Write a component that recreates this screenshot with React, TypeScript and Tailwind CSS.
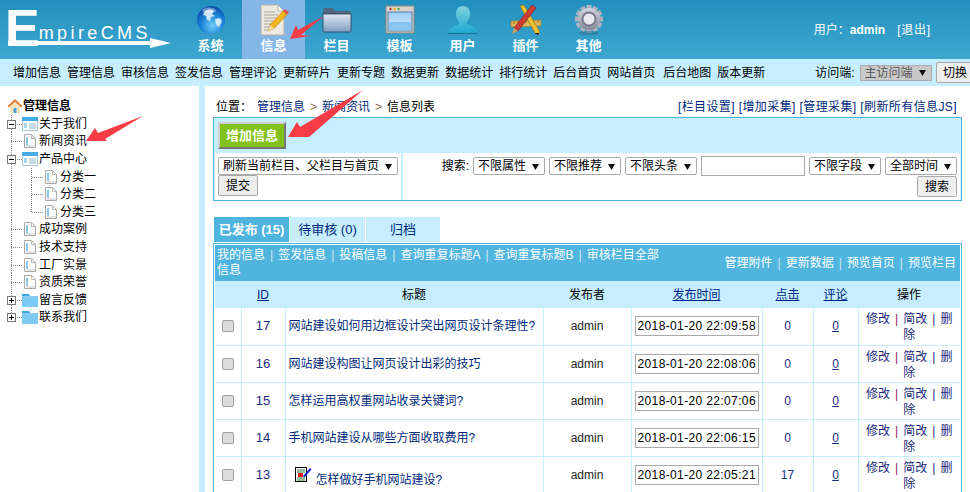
const menu = ["增加信息", "管理信息", "审核信息", "签发信息", "管理评论", "更新碎片", "更新专题", "数据更新", "数据统计", "排行统计", "后台首页", "网站首页", "后台地图", "版本更新"]

const rows = [
  { id: 17, title: "网站建设如何用边框设计突出网页设计条理性?", time: "2018-01-20 22:09:58", hits: 0 },
  { id: 16, title: "网站建设构图让网页设计出彩的技巧", time: "2018-01-20 22:08:06", hits: 0 },
  { id: 15, title: "怎样运用高权重网站收录关键词?", time: "2018-01-20 22:07:06", hits: 0 },
  { id: 14, title: "手机网站建设从哪些方面收取费用?", time: "2018-01-20 22:06:15", hits: 0 },
  { id: 13, title: "怎样做好手机网站建设?", time: "2018-01-20 22:05:21", hits: 17, pic: true },
]

function GlobeIcon() {
  return (
    <svg width="30" height="30" viewBox="0 0 30 30">
      <defs>
        <radialGradient id="globe" cx="0.55" cy="0.7" r="0.75">
          <stop offset="0" stopColor="#6fd0f5" />
          <stop offset="0.55" stopColor="#1a80d8" />
          <stop offset="1" stopColor="#0a3f9e" />
        </radialGradient>
      </defs>
      <circle cx="15" cy="15" r="14" fill="url(#globe)" />
      <path d="M9 6c3-2 7-2 9 0l-2 3 3 2-4 1-1 4-3-1-1-4-3-1zM19 14l5-1 2 3-3 6-3-2z" fill="#e8f4fb" opacity="0.85" />
      <ellipse cx="13" cy="5.5" rx="7" ry="3" fill="#fff" opacity="0.35" />
    </svg>
  )
}

function NoteIcon() {
  return (
    <svg width="30" height="32" viewBox="0 0 30 32">
      <path d="M2 1h17l6 6v24H2z" fill="#eeeae2" stroke="#b5b0a6" />
      <path d="M19 1v6h6z" fill="#fff" stroke="#b5b0a6" />
      <path d="M5 8h11M5 11h14M5 14h14M5 17h12M5 20h10M5 23h8M5 26h6" stroke="#a8a49c" />
      <path d="M9 27l2-6L24 7l4 3.5L15 24.5z" fill="#f2b71e" stroke="#b27c10" strokeWidth="0.6" />
      <path d="M24 7l2-2 4 3.5-2 2z" fill="#d9534a" />
      <path d="M9 27l2-6 4 3.5z" fill="#f5dcb0" />
    </svg>
  )
}

function FolderIcon() {
  return (
    <svg width="32" height="28" viewBox="0 0 32 28">
      <defs>
        <linearGradient id="folder" x1="0" y1="0" x2="0" y2="1">
          <stop offset="0" stopColor="#dfe8f2" />
          <stop offset="1" stopColor="#7f9dc4" />
        </linearGradient>
      </defs>
      <path d="M2 4a2 2 0 0 1 2-2h8l2 3h14a2 2 0 0 1 2 2v18H2z" fill="#51657f" />
      <path d="M2 8h28v17a1 1 0 0 1-1 1H3a1 1 0 0 1-1-1z" fill="url(#folder)" stroke="#2b3e5a" strokeWidth="0.8" />
    </svg>
  )
}

function WindowIcon() {
  return (
    <svg width="30" height="30" viewBox="0 0 30 30">
      <defs>
        <linearGradient id="pane" x1="0" y1="0" x2="0" y2="1">
          <stop offset="0" stopColor="#9ccaf3" />
          <stop offset="1" stopColor="#dff0fc" />
        </linearGradient>
      </defs>
      <rect x="1" y="1" width="28" height="27" fill="#d8d3cc" stroke="#8e8a84" />
      <rect x="3" y="7" width="24" height="19" fill="url(#pane)" stroke="#5c7ea8" />
      <path d="M3.5 17h23v8.5h-23z" fill="#6db7ee" opacity="0.7" />
      <circle cx="5.5" cy="4" r="1.2" fill="#c8342c" />
      <circle cx="9.5" cy="4" r="1.2" fill="#e4b020" />
      <circle cx="13.5" cy="4" r="1.2" fill="#4ea83a" />
    </svg>
  )
}

function UserIcon() {
  return (
    <svg width="32" height="30" viewBox="0 0 32 30">
      <defs>
        <linearGradient id="user" x1="0" y1="0" x2="0" y2="1">
          <stop offset="0" stopColor="#7fd4e0" />
          <stop offset="1" stopColor="#1fa8cf" />
        </linearGradient>
      </defs>
      <path d="M16 1c5 0 7 4 7 8 0 3-1 6-3 8v2c4 2 10 3 11 9H1c1-6 7-7 11-9v-2c-2-2-3-5-3-8 0-4 2-8 7-8z" fill="url(#user)" />
      <path d="M1 28h30v1H1z" fill="#1b6f8f" />
    </svg>
  )
}

function ToolsIcon() {
  return (
    <svg width="32" height="32" viewBox="0 0 32 32">
      <path d="M1 17l30-1 0 6-30 1z" fill="#e0b65a" stroke="#9a7a2c" strokeWidth="0.6" />
      <path d="M4 17v3M8 17v2M12 17v3M16 17v2M20 17v3M24 17v2M28 16v3" stroke="#8a6a20" />
      <path d="M10 2l4-1 16 27-2 3-3-2z" fill="#f0c230" stroke="#8a6a10" strokeWidth="0.6" />
      <path d="M22 1l4 3L8 27l-4-3z" fill="#cf3e35" stroke="#7e1e18" strokeWidth="0.6" />
      <path d="M4 24l4 3-6 3z" fill="#c9a05a" />
      <path d="M25 29l3 2 1-2z" fill="#111" />
    </svg>
  )
}

function GearIcon() {
  const teeth = [0, 30, 60, 90, 120, 150, 180, 210, 240, 270, 300, 330]
  return (
    <svg width="30" height="32" viewBox="0 0 30 32">
      <defs>
        <linearGradient id="gear" x1="0" y1="0" x2="0" y2="1">
          <stop offset="0" stopColor="#d4d6e0" />
          <stop offset="1" stopColor="#85879a" />
        </linearGradient>
      </defs>
      {teeth.map((a) => (
        <rect key={a} x="12.5" y="1" width="5" height="6" fill="#b0b2c0" transform={`rotate(${a} 15 15)`} />
      ))}
      <circle cx="15" cy="15" r="11" fill="url(#gear)" />
      <circle cx="15" cy="15" r="6.5" fill="#e8e8ee" stroke="#77798c" strokeWidth="2" />
      <ellipse cx="15" cy="29" rx="10" ry="2" fill="#2a6a8a" opacity="0.5" />
    </svg>
  )
}

const navItems = [
  { label: "系统", icon: <GlobeIcon /> },
  { label: "信息", icon: <NoteIcon />, active: true },
  { label: "栏目", icon: <FolderIcon /> },
  { label: "模板", icon: <WindowIcon /> },
  { label: "用户", icon: <UserIcon /> },
  { label: "插件", icon: <ToolsIcon /> },
  { label: "其他", icon: <GearIcon /> },
]

function Logo() {
  return (
    <div className="relative h-[59px] w-[179px] shrink-0 pl-[5px] font-['Liberation_Sans',sans-serif] text-white">
      <div className="flex items-end">
        <span className="text-[52px] leading-[56px] font-bold">E</span>
        <span className="mb-[13px] ml-[-1px] text-[18px] leading-[20px] tracking-[3.4px]">mpireCMS</span>
      </div>
      <svg className="absolute left-[8px] top-[38px]" width="164" height="10" viewBox="0 0 164 10">
        <path d="M0 3h142V0l21 5-21 5V7H0z" fill="#fff" />
      </svg>
    </div>
  )
}

function TreeLines({ kind, box }: { kind: "mid" | "last" | "sub" | "subLast"; box?: "plus" | "minus" }) {
  const sub = kind === "sub" || kind === "subLast"
  return (
    <svg className="shrink-0" width={sub ? 43 : 22} height="18" viewBox={sub ? "0 0 43 18" : "0 0 22 18"}>
      <path d={kind === "last" ? "M11.5 0v9" : "M11.5 0v18"} stroke="#888" strokeDasharray="1 1" fill="none" />
      <path d="M11 9.5h11" stroke="#888" strokeDasharray="1 1" fill="none" opacity={sub ? 0 : 1} />
      {sub && <path d={kind === "subLast" ? "M31.5 0v9M32 9.5h11" : "M31.5 0v18M32 9.5h11"} stroke="#888" strokeDasharray="1 1" fill="none" />}
      {box && (
        <g>
          <rect x="7.5" y="5.5" width="8" height="8" fill="#fff" stroke="#777" />
          <path d={box === "plus" ? "M9 9.5h5M11.5 7v5" : "M9 9.5h5"} stroke="#000" />
        </g>
      )}
    </svg>
  )
}

function PageIcon() {
  return (
    <svg className="shrink-0" width="16" height="16" viewBox="0 0 16 16">
      <path d="M2.5 1.5h7l4 4v9h-11z" fill="#fff" stroke="#aaa" />
      <path d="M9.500 1.500v4h4" fill="none" stroke="#bbb" />
      <path d="M4 4h2v8H4z" fill="#8cc8ee" />
      <path d="M4 12h9v2H4z" fill="#e4e4e4" />
    </svg>
  )
}

function ListIcon() {
  return (
    <svg className="shrink-0" width="16" height="16" viewBox="0 0 16 16">
      <rect x="0.500" y="1.500" width="15" height="13" fill="#fff" stroke="#a8c4d8" />
      <rect x="0" y="1" width="16" height="4" fill="#45ace8" />
      <rect x="2" y="7" width="3" height="5" fill="#a4d6f4" />
      <path d="M7 8h7M7 10h7M7 12h7" stroke="#8fb8d4" />
    </svg>
  )
}

function TreeFolder() {
  return (
    <svg className="shrink-0" width="16" height="16" viewBox="0 0 16 16">
      <path d="M0 2h7l1 2h8v11H0z" fill="#3aa4e4" />
      <path d="M0 6h16v9H0z" fill="#7ccbf4" />
      <path d="M0 5h16" stroke="#d8f0fc" />
    </svg>
  )
}

function TreeRow({ label, kind, box, icon }: { label: string; kind: "mid" | "last" | "sub" | "subLast"; box?: "plus" | "minus"; icon: "page" | "list" | "folder" }) {
  return (
    <div className="flex h-[17.6px] items-center">
      <TreeLines kind={kind} box={box} />
      {icon === "page" && <PageIcon />}
      {icon === "list" && <ListIcon />}
      {icon === "folder" && <TreeFolder />}
      <span className="ml-[1px] whitespace-nowrap">{label}</span>
    </div>
  )
}

function Sidebar() {
  return (
    <aside className="w-[199px] shrink-0 pt-[9px] text-[12px] leading-[16px] text-black">
      <div className="mb-[1px] flex h-[19px] items-end pl-[7px] font-bold">
        <svg width="16" height="16" viewBox="0 0 16 16">
          <path d="M8 1L0.500 8l1.500 1.500L8 4l6 5.500L15.500 8z" fill="#e8823a" />
          <path d="M3 9l5-4.500L13 9v6H3z" fill="#f4e4c0" />
          <path d="M6.500 10h3v5h-3z" fill="#4d9fdc" />
        </svg>
        <span>管理信息</span>
      </div>
      <TreeRow label="关于我们" kind="mid" box="minus" icon="list" />
      <TreeRow label="新闻资讯" kind="mid" icon="page" />
      <TreeRow label="产品中心" kind="mid" box="minus" icon="list" />
      <TreeRow label="分类一" kind="sub" icon="page" />
      <TreeRow label="分类二" kind="sub" icon="page" />
      <TreeRow label="分类三" kind="subLast" icon="page" />
      <TreeRow label="成功案例" kind="mid" icon="page" />
      <TreeRow label="技术支持" kind="mid" icon="page" />
      <TreeRow label="工厂实景" kind="mid" icon="page" />
      <TreeRow label="资质荣誉" kind="mid" icon="page" />
      <TreeRow label="留言反馈" kind="mid" box="plus" icon="folder" />
      <TreeRow label="联系我们" kind="last" box="plus" icon="folder" />
    </aside>
  )
}

function Dropdown({ label, className }: { label: string; className: string }) {
  return (
    <div className={`flex items-center justify-between rounded-[2px] border border-[#a9a9a9] pl-[4px] pr-[5px] text-[12px] leading-[16px] ${className}`}>
      <span className="whitespace-nowrap">{label}</span>
      <svg className="shrink-0" width="7" height="7" viewBox="0 0 7 7">
        <path d="M0 1h7L3.500 7z" fill="#111" />
      </svg>
    </div>
  )
}

function GrayButton({ label, className }: { label: string; className: string }) {
  return (
    <button className={`rounded-[2px] border border-[#a9a9a9] bg-[#eeeeee] text-[12px] leading-[16px] text-black ${className}`}>
      {label}
    </button>
  )
}

function Pipe() {
  return <span className="mx-[5px] text-[#d5e6f5]">|</span>
}

function Toolbar() {
  return (
    <div className="flex h-[36px] items-center justify-between bg-[#4fb4de] pl-[2px] pr-[4px] text-[12px] leading-[15px] text-white">
      <div className="w-[444px]">
        我的信息<Pipe />签发信息<Pipe />投稿信息<Pipe />查询重复标题A<Pipe />查询重复标题B<Pipe />审核栏目全部<br />信息
      </div>
      <div className="whitespace-nowrap">
        管理附件<Pipe />更新数据<Pipe />预览首页<Pipe />预览栏目
      </div>
    </div>
  )
}

function ListTable() {
  return (
    <table className="w-[745px] table-fixed border-collapse text-center text-[12px] leading-[16px] text-[#1c2a80]">
      <colgroup>
        <col className="w-[26px]" />
        <col className="w-[44px]" />
        <col className="w-[258px]" />
        <col className="w-[88px]" />
        <col className="w-[131px]" />
        <col className="w-[51px]" />
        <col className="w-[45px]" />
        <col className="w-[102px]" />
      </colgroup>
      <thead>
        <tr className="h-[27px] bg-[#c6eeff] font-normal text-black">
          <th className="font-normal"></th>
          <th className="font-normal text-[#00238a] underline">ID</th>
          <th className="font-normal">标题</th>
          <th className="font-normal">发布者</th>
          <th className="font-normal text-[#00238a] underline">发布时间</th>
          <th className="font-normal text-[#00238a] underline">点击</th>
          <th className="font-normal text-[#00238a] underline">评论</th>
          <th className="font-normal">操作</th>
        </tr>
      </thead>
      <tbody>
        {rows.map((r) => (
          <tr key={r.id} className="h-[37px] border-b border-[#c6eeff]">
            <td className="border-r border-[#c6eeff]">
              <span className="mx-auto block h-[12px] w-[12px] rounded-[2px] border border-[#a0a0a0] bg-[#dcdcdc]" />
            </td>
            <td className="border-r border-[#c6eeff] text-[13px]">{r.id}</td>
            <td className="border-r border-[#c6eeff] pl-[3px] text-left text-[#002a7c]">
              {r.pic ? (
                <div className="flex items-end pl-[6px] pt-[4px]">
                  <svg className="mb-[5px] shrink-0" width="17" height="17" viewBox="0 0 17 17">
                    <rect x="0.500" y="1.500" width="11" height="14" fill="#fff" stroke="#000" />
                    <path d="M2 4h8M2 6h8M2 12h8M2 14h8" stroke="#2a7a3a" />
                    <rect x="3" y="7" width="5" height="4" fill="#e01818" />
                    <path d="M8 10l7-8 1.500 1.500-7 8z" fill="#1a2ad0" />
                  </svg>
                  <span className="ml-[4px] whitespace-nowrap">{r.title}</span>
                </div>
              ) : (
                <span className="whitespace-nowrap">{r.title}</span>
              )}
            </td>
            <td className="border-r border-[#c6eeff] text-[#222]">admin</td>
            <td className="border-r border-[#c6eeff]">
              <input
                readOnly
                value={r.time}
                className="ml-[3px] block h-[20px] w-[124px] border border-[#a9a9a9] px-[2px] text-[12px] tracking-[0.37px] text-black"
              />
            </td>
            <td className="border-r border-[#c6eeff]">{r.hits}</td>
            <td className="border-r border-[#c6eeff] underline">0</td>
            <td className="px-[4px] align-top pt-[3px]">
              修改<span className="mx-[5px] text-[#8a1a5a]">|</span>简改<span className="mx-[5px] text-[#1c2a80]">|</span>删<br />除
            </td>
          </tr>
        ))}
      </tbody>
    </table>
  )
}

function Arrows() {
  return (
    <svg className="pointer-events-none absolute left-0 top-0" width="970" height="492" viewBox="0 0 970 492">
      <path d="M290 39l6-14 2 5 26-14-23 19 10 1z" fill="#f83c46" />
      <path d="M86 141l9-13 3 5 45-17-38 23 2 2z" fill="#f83c46" />
      <path d="M288 137l9-15 3 5 63-37-54 47 3 0z" fill="#f83c46" />
    </svg>
  )
}

export default function App() {
  return (
    <div className="relative h-[492px] w-[970px] overflow-hidden bg-white font-['Liberation_Sans','Noto_Sans_CJK_SC',sans-serif]">
      <header className="flex h-[59px] bg-gradient-to-b from-[#2190bf] to-[#3da7cf]">
        <Logo />
        <nav className="flex">
          {navItems.map((item) => (
            <div
              key={item.label}
              className={`flex w-[63px] flex-col items-center pt-[3px] ${item.active ? "bg-[#84b7e8]" : ""}`}
            >
              <div className="flex h-[33px] items-center">{item.icon}</div>
              <span className="mt-[2px] text-[13px] leading-[16px] font-bold text-white">{item.label}</span>
            </div>
          ))}
        </nav>
        <div className="ml-auto mr-[39px] flex items-center pt-[1px] text-[12px] whitespace-nowrap text-white">
          用户：<b>admin</b>
          <span className="ml-[12px] tracking-[0.8px]">[退出]</span>
        </div>
      </header>

      <div className="flex h-[27px] items-center bg-[#c6eeff] pl-[13px] text-[12px] text-black">
        <div className="flex gap-[6px]">
          {menu.map((m) => (
            <span key={m} className={`whitespace-nowrap ${m === "后台地图" ? "ml-[2px]" : ""}`}>{m}</span>
          ))}
        </div>
        <span className="ml-[50px] whitespace-nowrap">访问端:</span>
        <Dropdown label="主访问端" className="ml-[5px] h-[16px] w-[72px] shrink-0 rounded-none bg-[#c9c9c9] text-[#555]" />
        <GrayButton label="切换" className="ml-[4px] h-[21px] w-[39px] shrink-0" />
      </div>

      <div className="flex h-[406px]">
        <Sidebar />
        <div className="w-[6px] shrink-0 bg-[#c6eeff]" />
        <main className="w-[765px] shrink-0 pl-[8px] pr-[8px] text-[12px] leading-[16px] text-black">
          <div className="flex h-[31px] items-end justify-between pb-[2px] pl-[3px]">
            <div>
              位置：<span className="ml-[5px] text-[#002a7c]">管理信息</span>
              <span className="mx-[5px] text-[#8a6a3a]">&gt;</span>
              <span className="text-[#002a7c]">新闻资讯</span>
              <span className="mx-[5px] text-[#8a6a3a]">&gt;</span>信息列表
            </div>
            <div className="pr-[5px] tracking-[0.4px] text-[#002a7c]">[栏目设置] [增加采集] [管理采集] [刷新所有信息JS]</div>
          </div>

          <div className="h-[84px] w-[749px] border border-[#4fb4de] bg-[#c6eeff] p-px">
            <div className="h-[34px] pl-[3px] pt-[3px]">
              <button className="h-[27px] w-[68px] border-2 border-t-[#cfcfcf] border-l-[#cfcfcf] border-r-[#777] border-b-[#777] bg-[#82c11a] text-[13px] font-bold text-white">
                增加信息
              </button>
            </div>
            <div className="flex h-[47px] bg-white">
              <div className="w-[186px] shrink-0 pl-[3px] pt-[4px]">
                <Dropdown label="刷新当前栏目、父栏目与首页" className="h-[18px] w-[180px] bg-white" />
                <GrayButton label="提交" className="h-[21px] w-[40px]" />
              </div>
              <div className="w-[2px] shrink-0 bg-[#c6eeff]" />
              <div className="flex-1 pr-[3px] pt-[3px]">
                <div className="flex h-[20px] items-center justify-end gap-[4px]">
                  <span className="whitespace-nowrap">搜索:</span>
                  <Dropdown label="不限属性" className="h-[18px] w-[72px]" />
                  <Dropdown label="不限推荐" className="h-[18px] w-[72px]" />
                  <Dropdown label="不限头条" className="h-[18px] w-[72px]" />
                  <input className="h-[20px] w-[104px] border border-[#a9a9a9]" />
                  <Dropdown label="不限字段" className="h-[18px] w-[72px]" />
                  <Dropdown label="全部时间" className="h-[18px] w-[72px]" />
                </div>
                <div className="flex justify-end">
                  <GrayButton label="搜索" className="h-[21px] w-[40px]" />
                </div>
              </div>
            </div>
          </div>

          <div className="mt-[16px] flex h-[25px] gap-[1px] pl-[1px] text-[13px] leading-[25px]">
            <div className="w-[75px] bg-[#4fb4de] text-center font-bold whitespace-nowrap text-white">已发布 (15)</div>
            <div className="w-[75px] bg-[#c6eeff] text-center whitespace-nowrap text-[#002a7c]">待审核 (0)</div>
            <div className="w-[74px] bg-[#c6eeff] text-center text-[#002a7c]">归档</div>
          </div>

          <div className="mt-px w-[749px] border border-[#4fb4de] p-px">
            <Toolbar />
            <ListTable />
          </div>
        </main>
      </div>
      <Arrows />
    </div>
  )
}
